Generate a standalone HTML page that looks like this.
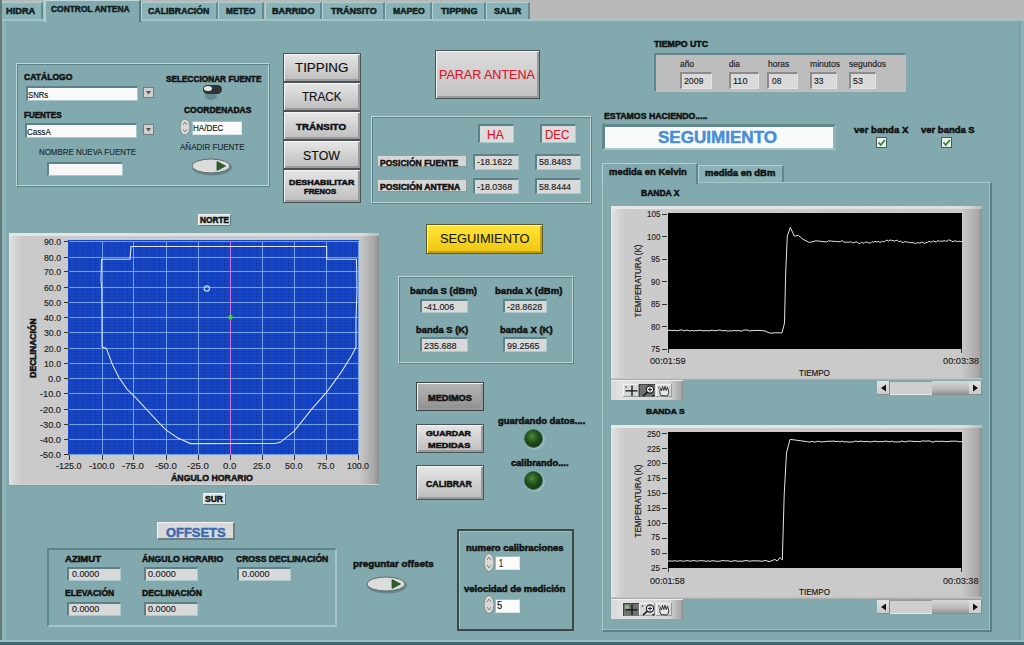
<!DOCTYPE html>
<html><head><meta charset="utf-8"><style>
html,body{margin:0;padding:0;width:1024px;height:645px;overflow:hidden;background:#82a9ae;}
body{position:relative;font-family:"Liberation Sans",sans-serif;}
div,span,svg{position:absolute;}
.t{white-space:nowrap;line-height:1;transform-origin:0 0;}
.b{-webkit-text-stroke:0.5px currentColor;}
.n{-webkit-text-stroke:0.15px currentColor;}
</style></head><body>
<div style="left:0px;top:0px;width:1024px;height:19px;background:#b8b8b8"></div>
<div style="left:0px;top:2px;width:43px;height:18px;box-sizing:border-box;background:#8ab3b8;border-top:1px solid #b0cdd0;border-left:1px solid #b4d2d5;border-right:2px solid #628a8f"></div>
<div style="left:141px;top:2px;width:77px;height:18px;box-sizing:border-box;background:#8ab3b8;border-top:1px solid #b0cdd0;border-left:1px solid #b4d2d5;border-right:2px solid #628a8f"></div>
<div style="left:218px;top:2px;width:46px;height:18px;box-sizing:border-box;background:#8ab3b8;border-top:1px solid #b0cdd0;border-left:1px solid #b4d2d5;border-right:2px solid #628a8f"></div>
<div style="left:265px;top:2px;width:57px;height:18px;box-sizing:border-box;background:#8ab3b8;border-top:1px solid #b0cdd0;border-left:1px solid #b4d2d5;border-right:2px solid #628a8f"></div>
<div style="left:322px;top:2px;width:63px;height:18px;box-sizing:border-box;background:#8ab3b8;border-top:1px solid #b0cdd0;border-left:1px solid #b4d2d5;border-right:2px solid #628a8f"></div>
<div style="left:385px;top:2px;width:47px;height:18px;box-sizing:border-box;background:#8ab3b8;border-top:1px solid #b0cdd0;border-left:1px solid #b4d2d5;border-right:2px solid #628a8f"></div>
<div style="left:432px;top:2px;width:54px;height:18px;box-sizing:border-box;background:#8ab3b8;border-top:1px solid #b0cdd0;border-left:1px solid #b4d2d5;border-right:2px solid #628a8f"></div>
<div style="left:486px;top:2px;width:44px;height:18px;box-sizing:border-box;background:#8ab3b8;border-top:1px solid #b0cdd0;border-left:1px solid #b4d2d5;border-right:2px solid #628a8f"></div>
<div style="left:0px;top:19px;width:1024px;height:2px;background:#a0c6ca"></div>
<div style="left:44px;top:0px;width:97px;height:22px;box-sizing:border-box;background:#82a9ae;border-top:1px solid #c0d8db;border-left:2px solid #b0ced1;border-right:2px solid #567c81"></div>
<div style="left:0px;top:0px;width:2px;height:645px;background:#667a7a"></div>
<div style="left:2px;top:21px;width:4px;height:621px;background:#8cb3b8"></div>
<div style="left:0px;top:640px;width:1024px;height:2px;background:#9cc0c4"></div>
<div style="left:1019px;top:21px;width:1px;height:619px;background:#739aa0"></div>
<div style="left:1021px;top:21px;width:3px;height:619px;background:#8db1b6"></div>
<div style="left:0px;top:642px;width:1024px;height:3px;background:#44686d"></div>
<span class="t b" id="t0" style="left:6.3px;top:7.02px;font-size:8.87px;font-weight:bold;color:#102020;transform:scaleX(1.0441);">HIDRA</span>
<span class="t b" id="t1" style="left:50.8px;top:4.79px;font-size:8.72px;font-weight:bold;color:#102020;transform:scaleX(0.9659);">CONTROL ANTENA</span>
<span class="t b" id="t2" style="left:147.5px;top:7.22px;font-size:8.87px;font-weight:bold;color:#102020;transform:scaleX(0.9901);">CALIBRACIÓN</span>
<span class="t b" id="t3" style="left:225.6px;top:7.22px;font-size:8.87px;font-weight:bold;color:#102020;transform:scaleX(0.9329);">METEO</span>
<span class="t b" id="t4" style="left:271.8px;top:7.22px;font-size:8.87px;font-weight:bold;color:#102020;transform:scaleX(1.0280);">BARRIDO</span>
<span class="t b" id="t5" style="left:330.7px;top:7.22px;font-size:8.87px;font-weight:bold;color:#102020;transform:scaleX(1.0105);">TRÁNSITO</span>
<span class="t b" id="t6" style="left:392.7px;top:7.22px;font-size:8.87px;font-weight:bold;color:#102020;transform:scaleX(0.9723);">MAPEO</span>
<span class="t b" id="t7" style="left:441.4px;top:7.22px;font-size:8.87px;font-weight:bold;color:#102020;transform:scaleX(1.0323);">TIPPING</span>
<span class="t b" id="t8" style="left:494.1px;top:7.22px;font-size:8.87px;font-weight:bold;color:#102020;transform:scaleX(1.0266);">SALIR</span>
<div style="left:16px;top:63px;width:254px;height:124px;box-sizing:border-box;border-top:1px solid #bfd8db;border-left:1px solid #bfd8db;border-bottom:1px solid #5b8288;border-right:1px solid #5b8288"></div>
<div style="left:17px;top:64px;width:252px;height:122px;box-sizing:border-box;border-top:1px solid #5b8288;border-left:1px solid #5b8288;border-bottom:1px solid #bfd8db;border-right:1px solid #bfd8db"></div>
<span class="t b" id="t9" style="left:24.1px;top:73.34px;font-size:8.43px;font-weight:bold;color:#111;transform:scaleX(1.0176);">CATÁLOGO</span>
<div style="left:26px;top:86px;width:112px;height:15px;background:#f9f9f9;border-top:2px solid #5b8288;border-left:2px solid #5b8288;border-bottom:1px solid #a9c9cd;border-right:1px solid #a9c9cd;box-sizing:border-box"></div>
<span class="t n" id="t10" style="left:27.8px;top:89.94px;font-size:9.71px;font-weight:normal;color:#111;transform:scaleX(0.7970);">SNRs</span>
<div style="left:143px;top:87px;width:11px;height:11px;box-sizing:border-box;background:#cfcfcf;border:1px solid #6f7f80"></div>
<svg style="left:145px;top:89px" width="7" height="7"><path d="M1 2 L6 2 L3.5 5.5 Z" fill="#555"/></svg>
<span class="t b" id="t11" style="left:23.5px;top:111.34px;font-size:8.43px;font-weight:bold;color:#111;transform:scaleX(0.9539);">FUENTES</span>
<div style="left:25px;top:123px;width:112px;height:15px;background:#f9f9f9;border-top:2px solid #5b8288;border-left:2px solid #5b8288;border-bottom:1px solid #a9c9cd;border-right:1px solid #a9c9cd;box-sizing:border-box"></div>
<span class="t n" id="t12" style="left:27.4px;top:126.74px;font-size:9.71px;font-weight:normal;color:#111;transform:scaleX(0.8323);">CassA</span>
<div style="left:143px;top:124px;width:11px;height:11px;box-sizing:border-box;background:#cfcfcf;border:1px solid #6f7f80"></div>
<svg style="left:145px;top:126px" width="7" height="7"><path d="M1 2 L6 2 L3.5 5.5 Z" fill="#555"/></svg>
<span class="t n" id="t13" style="left:39px;top:148.05px;font-size:9.29px;font-weight:normal;color:#1a2a2c;transform:scaleX(0.8524);">NOMBRE NUEVA FUENTE</span>
<div style="left:47px;top:162px;width:76px;height:14px;background:#f7f7f7;border-top:2px solid #5b8288;border-left:2px solid #5b8288;border-bottom:1px solid #a9c9cd;border-right:1px solid #a9c9cd;box-sizing:border-box"></div>
<span class="t b" id="t14" style="left:165.6px;top:75.34px;font-size:8.43px;font-weight:bold;color:#111;transform:scaleX(0.9802);">SELECCIONAR FUENTE</span>
<svg style="left:198px;top:83px" width="30" height="20"><ellipse cx="13" cy="13" rx="6" ry="4" fill="#5d8388" opacity="0.8"/><rect x="5" y="2" width="19" height="9" rx="4.5" fill="#2e3435"/><ellipse cx="10" cy="5.5" rx="4" ry="2.5" fill="#e8e8e8"/></svg>
<span class="t b" id="t15" style="left:184.3px;top:106.02px;font-size:8.87px;font-weight:bold;color:#111;transform:scaleX(0.9561);">COORDENADAS</span>
<svg style="left:179px;top:118px" width="13" height="19"><ellipse cx="6" cy="9" rx="5" ry="8" fill="#d8d8d8" stroke="#7c8c8d"/><path d="M4 7 L6 4 L8 7 M4 11 L6 14 L8 11" stroke="#888" fill="none"/></svg>
<div style="left:192px;top:121px;width:50px;height:14px;box-sizing:border-box;background:#fbfbfb;border-top:1px solid #9fbcbf;border-left:1px solid #9fbcbf;border-bottom:1px solid #d8e8ea;border-right:1px solid #d8e8ea"></div>
<span class="t n" id="t16" style="left:193.4px;top:122.56px;font-size:9.86px;font-weight:normal;color:#111;transform:scaleX(0.8171);">HA/DEC</span>
<span class="t n" id="t17" style="left:180px;top:143.45px;font-size:9.29px;font-weight:normal;color:#1a2a2c;transform:scaleX(0.8639);">AÑADIR FUENTE</span>
<svg style="left:190px;top:157px" width="44" height="20"><ellipse cx="22" cy="10.5" rx="20" ry="8" fill="#4f6a6e" opacity="0.55"/><ellipse cx="21" cy="9" rx="19" ry="7" fill="#dcdcdc" stroke="#5d6a6b"/><path d="M27 4.5 L35.5 9 L27 13.5 Z" fill="#2b5e28" stroke="#244f22" stroke-width="0.8" stroke-linejoin="round"/></svg>
<div style="left:283px;top:53px;width:78px;height:29px;box-sizing:border-box;border:1px solid #4a5456;background:linear-gradient(#e6e6e6,#d2d2d2 50%,#bdbdbd);box-shadow:inset 1px 1px 0 #f4f4f4,inset -2px -2px 0 #9a9a9a"></div>
<div style="left:283px;top:82px;width:78px;height:29px;box-sizing:border-box;border:1px solid #4a5456;background:linear-gradient(#e6e6e6,#d2d2d2 50%,#bdbdbd);box-shadow:inset 1px 1px 0 #f4f4f4,inset -2px -2px 0 #9a9a9a"></div>
<div style="left:283px;top:111px;width:78px;height:29px;box-sizing:border-box;border:1px solid #4a5456;background:linear-gradient(#e6e6e6,#d2d2d2 50%,#bdbdbd);box-shadow:inset 1px 1px 0 #f4f4f4,inset -2px -2px 0 #9a9a9a"></div>
<div style="left:283px;top:140px;width:78px;height:29px;box-sizing:border-box;border:1px solid #4a5456;background:linear-gradient(#e6e6e6,#d2d2d2 50%,#bdbdbd);box-shadow:inset 1px 1px 0 #f4f4f4,inset -2px -2px 0 #9a9a9a"></div>
<div style="left:283px;top:169px;width:78px;height:34px;box-sizing:border-box;border:1px solid #4a5456;background:linear-gradient(#e6e6e6,#d2d2d2 50%,#bdbdbd);box-shadow:inset 1px 1px 0 #f4f4f4,inset -2px -2px 0 #9a9a9a"></div>
<span class="t n" id="t18" style="left:295px;top:62.14px;font-size:12.0px;font-weight:normal;color:#111;transform:scaleX(1.1121);">TIPPING</span>
<span class="t n" id="t19" style="left:301.7px;top:91.25px;font-size:12.57px;font-weight:normal;color:#111;transform:scaleX(0.9277);">TRACK</span>
<span class="t b" id="t20" style="left:296.4px;top:121.96px;font-size:9.59px;font-weight:bold;color:#111;transform:scaleX(1.0270);">TRÁNSITO</span>
<span class="t n" id="t21" style="left:303px;top:150.28px;font-size:12.71px;font-weight:normal;color:#111;transform:scaleX(0.9769);">STOW</span>
<span class="t b" id="t22" style="left:288.5px;top:178.64px;font-size:7.56px;font-weight:bold;color:#111;transform:scaleX(1.1757);">DESHABILITAR</span>
<span class="t b" id="t23" style="left:304.3px;top:188.12px;font-size:7.99px;font-weight:bold;color:#111;transform:scaleX(0.9675);">FRENOS</span>
<div style="left:435px;top:50px;width:105px;height:49px;box-sizing:border-box;border:1px solid #4a5456;background:linear-gradient(#dcdcdc,#cfcfcf 50%,#c2c2c2);box-shadow:inset 1px 1px 0 #f4f4f4,inset -2px -2px 0 #9a9a9a"></div>
<span class="t n" id="t24" style="left:439px;top:69.05px;font-size:12.57px;font-weight:normal;color:#d8182a;transform:scaleX(0.9968);">PARAR ANTENA</span>
<div style="left:371px;top:116px;width:221px;height:88px;box-sizing:border-box;border-top:1px solid #bfd8db;border-left:1px solid #bfd8db;border-bottom:1px solid #5b8288;border-right:1px solid #5b8288"></div>
<div style="left:372px;top:117px;width:219px;height:86px;box-sizing:border-box;border-top:1px solid #5b8288;border-left:1px solid #5b8288;border-bottom:1px solid #bfd8db;border-right:1px solid #bfd8db"></div>
<div style="left:478px;top:124px;width:36px;height:19px;background:#dcdcdc;border-top:2px solid #5b8288;border-left:2px solid #5b8288;border-bottom:1px solid #a9c9cd;border-right:1px solid #a9c9cd;box-sizing:border-box"></div>
<div style="left:540px;top:124px;width:36px;height:19px;background:#dcdcdc;border-top:2px solid #5b8288;border-left:2px solid #5b8288;border-bottom:1px solid #a9c9cd;border-right:1px solid #a9c9cd;box-sizing:border-box"></div>
<span class="t n" id="t25" style="left:487px;top:128.85px;font-size:12.57px;font-weight:normal;color:#d8182a;transform:scaleX(0.9626);">HA</span>
<span class="t n" id="t26" style="left:544.9px;top:128.85px;font-size:12.57px;font-weight:normal;color:#d8182a;transform:scaleX(0.9159);">DEC</span>
<div style="left:378px;top:156px;width:89px;height:11px;box-sizing:border-box;background:#d6d6d6;border-right:1px solid #8a9a9b;border-bottom:1px solid #8a9a9b"></div>
<div style="left:378px;top:180px;width:89px;height:12px;box-sizing:border-box;background:#d6d6d6;border-right:1px solid #8a9a9b;border-bottom:1px solid #8a9a9b"></div>
<span class="t b" id="t27" style="left:380px;top:159.52px;font-size:8.28px;font-weight:bold;color:#111;transform:scaleX(1.0332);">POSICIÓN FUENTE</span>
<span class="t b" id="t28" style="left:380px;top:184.12px;font-size:8.28px;font-weight:bold;color:#111;transform:scaleX(1.0448);">POSICIÓN ANTENA</span>
<div style="left:473px;top:154px;width:46px;height:16px;background:#d9d9d9;border-top:2px solid #5b8288;border-left:2px solid #5b8288;border-bottom:1px solid #a9c9cd;border-right:1px solid #a9c9cd;box-sizing:border-box"></div>
<div style="left:535px;top:154px;width:46px;height:16px;background:#d9d9d9;border-top:2px solid #5b8288;border-left:2px solid #5b8288;border-bottom:1px solid #a9c9cd;border-right:1px solid #a9c9cd;box-sizing:border-box"></div>
<div style="left:473px;top:178px;width:46px;height:16px;background:#d9d9d9;border-top:2px solid #5b8288;border-left:2px solid #5b8288;border-bottom:1px solid #a9c9cd;border-right:1px solid #a9c9cd;box-sizing:border-box"></div>
<div style="left:535px;top:178px;width:46px;height:16px;background:#d9d9d9;border-top:2px solid #5b8288;border-left:2px solid #5b8288;border-bottom:1px solid #a9c9cd;border-right:1px solid #a9c9cd;box-sizing:border-box"></div>
<span class="t n" id="t29" style="left:476.8px;top:157.10px;font-size:9.57px;font-weight:normal;color:#222;transform:scaleX(0.9321);">-18.1622</span>
<span class="t n" id="t30" style="left:538.6px;top:157.10px;font-size:9.57px;font-weight:normal;color:#222;transform:scaleX(0.9312);">58.8483</span>
<span class="t n" id="t31" style="left:476.8px;top:182.65px;font-size:9.29px;font-weight:normal;color:#222;transform:scaleX(0.9607);">-18.0368</span>
<span class="t n" id="t32" style="left:539.3px;top:182.65px;font-size:9.29px;font-weight:normal;color:#222;transform:scaleX(0.9534);">58.8444</span>
<span class="t b" id="t33" style="left:654.4px;top:41.29px;font-size:8.14px;font-weight:bold;color:#111;transform:scaleX(1.0776);">TIEMPO UTC</span>
<div style="left:654px;top:53px;width:252px;height:39px;box-sizing:border-box;background:#bdbdbd;border-top:2px solid #5f878c;border-left:2px solid #5f878c;border-bottom:1px solid #a8c8cc;border-right:1px solid #a8c8cc"></div>
<div style="left:680px;top:72px;width:32px;height:17px;box-sizing:border-box;background:#dadada;border-top:2px solid #8c8c8c;border-left:2px solid #8c8c8c;border-bottom:1px solid #e4e4e4;border-right:1px solid #e4e4e4"></div>
<span class="t n" id="t34" style="left:680px;top:60.11px;font-size:8.57px;font-weight:normal;color:#1a1a1a;transform:scaleX(0.9792);">año</span>
<span class="t n" id="t35" style="left:683.8px;top:76.82px;font-size:9.14px;font-weight:normal;color:#1a1a1a;transform:scaleX(0.9551);">2009</span>
<div style="left:729px;top:72px;width:30px;height:17px;box-sizing:border-box;background:#dadada;border-top:2px solid #8c8c8c;border-left:2px solid #8c8c8c;border-bottom:1px solid #e4e4e4;border-right:1px solid #e4e4e4"></div>
<span class="t n" id="t36" style="left:728.9px;top:60.11px;font-size:8.57px;font-weight:normal;color:#1a1a1a;transform:scaleX(0.9530);">dia</span>
<span class="t n" id="t37" style="left:733px;top:76.82px;font-size:9.14px;font-weight:normal;color:#1a1a1a;transform:scaleX(0.9899);">110</span>
<div style="left:767px;top:72px;width:31px;height:17px;box-sizing:border-box;background:#dadada;border-top:2px solid #8c8c8c;border-left:2px solid #8c8c8c;border-bottom:1px solid #e4e4e4;border-right:1px solid #e4e4e4"></div>
<span class="t n" id="t38" style="left:767.8px;top:60.11px;font-size:8.57px;font-weight:normal;color:#1a1a1a;transform:scaleX(0.9896);">horas</span>
<span class="t n" id="t39" style="left:771.7px;top:76.82px;font-size:9.14px;font-weight:normal;color:#1a1a1a;transform:scaleX(0.9157);">08</span>
<div style="left:810px;top:72px;width:27px;height:17px;box-sizing:border-box;background:#dadada;border-top:2px solid #8c8c8c;border-left:2px solid #8c8c8c;border-bottom:1px solid #e4e4e4;border-right:1px solid #e4e4e4"></div>
<span class="t n" id="t40" style="left:809.7px;top:60.11px;font-size:8.57px;font-weight:normal;color:#1a1a1a;transform:scaleX(1.0005);">minutos</span>
<span class="t n" id="t41" style="left:813.9px;top:76.82px;font-size:9.14px;font-weight:normal;color:#1a1a1a;transform:scaleX(0.9255);">33</span>
<div style="left:849px;top:72px;width:27px;height:17px;box-sizing:border-box;background:#dadada;border-top:2px solid #8c8c8c;border-left:2px solid #8c8c8c;border-bottom:1px solid #e4e4e4;border-right:1px solid #e4e4e4"></div>
<span class="t n" id="t42" style="left:849px;top:60.11px;font-size:8.57px;font-weight:normal;color:#1a1a1a;transform:scaleX(0.9962);">segundos</span>
<span class="t n" id="t43" style="left:852.5px;top:76.82px;font-size:9.14px;font-weight:normal;color:#1a1a1a;transform:scaleX(0.9649);">53</span>
<span class="t b" id="t44" style="left:604.3px;top:111.65px;font-size:9.01px;font-weight:bold;color:#111;transform:scaleX(0.9687);">ESTAMOS HACIENDO.....</span>
<div style="left:602px;top:124px;width:234px;height:26px;box-sizing:border-box;background:#f9fbfb;border-top:3px solid #5f878c;border-left:3px solid #5f878c;border-bottom:2px solid #a8c8cc;border-right:3px solid #8fb4b8"></div>
<span class="t b" id="t45" style="left:658px;top:129.89px;font-size:15.99px;font-weight:bold;color:#4a8ed8;transform:scaleX(1.0661);">SEGUIMIENTO</span>
<span class="t b" id="t46" style="left:853.9px;top:126.27px;font-size:9.16px;font-weight:bold;color:#111;transform:scaleX(1.0458);">ver banda X</span>
<span class="t b" id="t47" style="left:920.9px;top:126.27px;font-size:9.16px;font-weight:bold;color:#111;transform:scaleX(1.0342);">ver banda S</span>
<div style="left:876px;top:137px;width:11px;height:11px;box-sizing:border-box;background:#e8f0ea;border:1px solid #4a5a5c"></div>
<svg style="left:877px;top:138px" width="9" height="9"><path d="M1.5 4.5 L3.8 7 L7.8 2" stroke="#2f7a3a" stroke-width="1.6" fill="none"/></svg>
<div style="left:941px;top:137px;width:11px;height:11px;box-sizing:border-box;background:#e8f0ea;border:1px solid #4a5a5c"></div>
<svg style="left:942px;top:138px" width="9" height="9"><path d="M1.5 4.5 L3.8 7 L7.8 2" stroke="#2f7a3a" stroke-width="1.6" fill="none"/></svg>
<div style="left:602px;top:182px;width:390px;height:450px;box-sizing:border-box;border-top:1px solid #a8c8cc;border-left:1px solid #a8c8cc;border-right:2px solid #5a8186;border-bottom:2px solid #5a8186;box-shadow:inset -1px -1px 0 #9cc0c4"></div>
<div style="left:698px;top:165px;width:86px;height:17px;box-sizing:border-box;background:#8ab2b7;border-top:1px solid #b4d0d3;border-left:1px solid #b4d0d3;border-right:2px solid #5f868b"></div>
<div style="left:602px;top:163px;width:96px;height:21px;box-sizing:border-box;background:#82a9ae;border-top:1px solid #b4d0d3;border-left:1px solid #b4d0d3;border-right:2px solid #5f868b"></div>
<span class="t b" id="t48" style="left:609px;top:166.78px;font-size:9.74px;font-weight:bold;color:#111;transform:scaleX(0.9717);">medida en Kelvin</span>
<span class="t b" id="t49" style="left:705.4px;top:169.19px;font-size:8.72px;font-weight:bold;color:#111;transform:scaleX(1.0828);">medida en dBm</span>
<span class="t b" id="t50" style="left:640.9px;top:188.54px;font-size:8.43px;font-weight:bold;color:#111;transform:scaleX(1.0115);">BANDA X</span>
<span class="t b" id="t51" style="left:645.7px;top:408.49px;font-size:7.85px;font-weight:bold;color:#111;transform:scaleX(1.0888);">BANDA S</span>
<div style="left:611px;top:206px;width:371px;height:174px;background:linear-gradient(90deg,#e4e4e4 0px,#d2d2d2 9px,#cbcbcb 14px,#c9c9c9 350px,#a9a9a9 367px,#8e8e8e 371px)"></div>
<div style="left:611px;top:206px;width:371px;height:3px;background:linear-gradient(90deg,#e8e8e8,#dedede 95%,#bbb)"></div>
<div style="left:611px;top:378px;width:371px;height:1px;background:#c4c4c4"></div>
<div style="left:611px;top:379px;width:371px;height:1px;background:#adadad"></div>
<div style="left:668px;top:213px;width:294px;height:136px;background:#000"></div>
<svg style="left:668px;top:213px" width="294" height="136"><polyline points="0.0,117.5 2.0,117.2 4.0,117.6 6.0,117.3 8.0,117.6 10.0,117.7 12.0,117.0 14.0,116.9 16.0,117.9 18.0,117.2 20.0,117.2 22.0,118.1 24.0,117.5 26.0,117.9 28.0,117.5 30.0,117.7 32.0,117.1 34.0,117.7 36.0,117.9 38.0,117.5 40.0,117.8 42.0,117.7 44.0,117.0 46.0,117.8 48.0,117.6 50.0,117.3 52.0,116.9 54.0,117.9 56.0,117.5 58.0,117.8 60.0,118.0 62.0,117.8 64.0,118.0 66.0,117.4 68.0,117.9 70.0,117.4 72.0,118.0 74.0,118.0 76.0,117.0 78.0,117.1 80.0,117.2 82.0,118.1 84.0,117.4 86.0,117.7 88.0,117.3 90.0,117.5 92.0,117.4 97.0,118.0 102.0,120.2 108.0,119.8 114.0,119.8 116.5,110.0 117.6,62.0 119.3,23.0 122.3,14.4 126.3,23.0 130.6,22.6 135.0,26.3 141.4,29.5 148.0,27.8 158.8,29.0 160.5,27.7 162.0,28.1 163.5,28.0 165.0,28.5 166.5,28.1 168.0,28.6 169.5,28.5 171.0,28.8 172.5,28.4 174.0,27.6 175.5,28.9 177.0,29.3 178.5,29.3 180.0,28.9 181.5,29.3 183.0,28.6 184.5,29.9 186.0,29.5 187.5,29.1 189.0,28.8 190.5,30.3 192.0,30.6 193.5,29.1 195.0,30.3 196.5,29.6 198.0,29.1 199.5,29.3 201.0,30.0 202.5,30.1 204.0,28.5 205.5,29.3 207.0,28.1 208.5,29.2 210.0,28.3 211.5,29.2 213.0,29.2 214.5,28.2 216.0,29.0 217.5,27.6 219.0,27.1 220.5,28.0 222.0,27.0 223.5,27.3 225.0,27.7 226.5,28.1 228.0,27.4 229.5,27.3 231.0,28.9 232.5,28.0 234.0,29.3 235.5,29.4 237.0,28.6 238.5,28.9 240.0,29.2 241.5,29.6 243.0,29.6 244.5,29.7 246.0,29.9 247.5,30.5 249.0,29.8 250.5,29.7 252.0,30.2 253.5,29.3 255.0,29.3 256.5,30.5 258.0,29.5 259.5,29.5 261.0,28.4 262.5,28.9 264.0,29.1 265.5,27.9 267.0,28.8 268.5,28.7 270.0,27.5 271.5,28.4 273.0,28.0 274.5,28.3 276.0,27.6 277.5,28.2 279.0,28.2 280.5,27.0 282.0,27.1 283.5,28.2 285.0,28.8 286.5,27.7 288.0,28.2 289.5,28.6 291.0,28.2 292.5,28.5 294.0,28.5" fill="none" stroke="#e4e4e4" stroke-width="1"/></svg>
<div style="left:662px;top:214px;width:5px;height:1px;background:#333"></div>
<div style="left:662px;top:236px;width:5px;height:1px;background:#333"></div>
<div style="left:662px;top:259px;width:5px;height:1px;background:#333"></div>
<div style="left:662px;top:281px;width:5px;height:1px;background:#333"></div>
<div style="left:662px;top:304px;width:5px;height:1px;background:#333"></div>
<div style="left:662px;top:326px;width:5px;height:1px;background:#333"></div>
<div style="left:662px;top:349px;width:5px;height:1px;background:#333"></div>
<div style="left:668px;top:349px;width:1px;height:4px;background:#333"></div>
<div style="left:961px;top:349px;width:1px;height:4px;background:#333"></div>
<div style="left:611px;top:380px;width:72px;height:20px;background:linear-gradient(90deg,#d8d8d8,#e2e2e2 15%,#d6d6d6 80%,#a8a8a8 97%,#8a8a8a)"></div>
<div style="left:611px;top:380px;width:72px;height:1px;background:#eeeeee"></div>
<div style="left:623px;top:384px;width:16px;height:13px;background:#d6d6d6;box-shadow:inset -1px -1px 0 #9a9a9a,inset 1px 1px 0 #f2f2f2"></div>
<div style="left:639px;top:384px;width:16px;height:13px;background:#6e756e;box-shadow:inset 1px 1px 0 #444"></div>
<div style="left:656px;top:384px;width:16px;height:13px;background:#d6d6d6;box-shadow:inset -1px -1px 0 #9a9a9a,inset 1px 1px 0 #f2f2f2"></div>
<svg style="left:623px;top:384px" width="50" height="13"><circle cx="3" cy="3" r="1" fill="#777"/><path d="M9 1.5 V12 M2.5 6.8 H14.5" stroke="#111" stroke-width="1.3"/><circle cx="19.5" cy="3" r="1" fill="#777"/><circle cx="27" cy="5.5" r="3.6" fill="#e6e8f0" stroke="#222" stroke-width="1.1"/><path d="M27 3.5 V7.5 M25 5.5 H29" stroke="#223" stroke-width="1"/><path d="M24.5 8 L20 12" stroke="#111" stroke-width="1.6"/><path d="M29 11 L32 11 L30.5 12.8 Z" fill="#111"/><circle cx="36" cy="3.5" r="0.9" fill="#777"/><path d="M38 11.5 C36.5 9 36.5 6 37.5 4.5 L38.5 7 L39.5 2.5 L40.8 6.5 L42 2.3 L43.2 6.5 L44.5 3.2 L45.5 7 C46 9.5 45 11 44 12 Z" fill="#e8e8e8" stroke="#222" stroke-width="0.9"/></svg>
<div style="left:877px;top:381px;width:105px;height:14px;background:#c8c8c8"></div>
<div style="left:877px;top:381px;width:13px;height:14px;background:linear-gradient(#e2e2e2,#c9c9c9);box-shadow:inset -1px -1px 0 #8a8a8a"></div>
<div style="left:969px;top:381px;width:13px;height:14px;background:linear-gradient(#e2e2e2,#c9c9c9);box-shadow:inset -1px -1px 0 #8a8a8a"></div>
<div style="left:890px;top:381px;width:42px;height:14px;background:#cfcfcf;box-shadow:inset 0 -1px 0 #e8e8e8,inset 0 1px 0 #999"></div>
<div style="left:932px;top:381px;width:37px;height:14px;background:linear-gradient(#d8d8d8,#b8b8b8 60%,#8a8a8a)"></div>
<svg style="left:877px;top:381px" width="105" height="14"><path d="M4 7 L9 3.5 L9 10.5 Z" fill="#111"/><path d="M101 7 L96 3.5 L96 10.5 Z" fill="#111"/></svg>
<div style="left:633px;top:243px;width:10px;height:74px;"></div>
<div style="left:611px;top:425px;width:371px;height:174px;background:linear-gradient(90deg,#e4e4e4 0px,#d2d2d2 9px,#cbcbcb 14px,#c9c9c9 350px,#a9a9a9 367px,#8e8e8e 371px)"></div>
<div style="left:611px;top:425px;width:371px;height:3px;background:linear-gradient(90deg,#e8e8e8,#dedede 95%,#bbb)"></div>
<div style="left:611px;top:597px;width:371px;height:1px;background:#c4c4c4"></div>
<div style="left:611px;top:598px;width:371px;height:1px;background:#adadad"></div>
<div style="left:668px;top:432px;width:294px;height:136px;background:#000"></div>
<svg style="left:668px;top:432px" width="294" height="136"><polyline points="0.0,129.0 2.0,128.9 4.0,129.1 6.0,128.8 8.0,128.9 10.0,129.3 12.0,128.5 14.0,129.1 16.0,129.2 18.0,128.8 20.0,128.7 22.0,129.3 24.0,128.7 26.0,128.7 28.0,128.9 30.0,129.2 32.0,128.6 34.0,128.8 36.0,128.8 38.0,129.3 40.0,128.9 42.0,129.4 44.0,128.7 46.0,128.8 48.0,129.2 50.0,129.4 52.0,129.0 54.0,128.7 56.0,128.6 58.0,129.0 60.0,128.7 62.0,129.3 64.0,129.3 66.0,128.7 68.0,128.8 70.0,129.3 72.0,129.1 74.0,129.3 76.0,128.8 78.0,128.6 80.0,128.8 82.0,129.3 84.0,128.8 86.0,128.8 88.0,128.9 90.0,128.9 92.0,128.9 94.0,129.4 96.0,128.7 98.0,128.5 100.0,129.4 102.0,129.4 106.9,127.4 109.2,129.0 112.0,125.6 114.3,127.9 116.2,62.8 118.5,20.9 122.0,7.4 127.8,8.1 139.4,9.7 142.0,10.1 144.0,9.4 146.0,10.0 148.0,10.0 150.0,9.2 152.0,9.8 154.0,9.9 156.0,9.7 158.0,9.5 160.0,9.2 162.0,9.3 164.0,9.2 166.0,9.0 168.0,9.6 170.0,9.2 172.0,9.9 174.0,9.0 176.0,10.0 178.0,9.7 180.0,10.0 182.0,10.0 184.0,10.0 186.0,9.6 188.0,8.9 190.0,9.8 192.0,9.1 194.0,9.3 196.0,9.7 198.0,9.5 200.0,9.4 202.0,10.0 204.0,9.6 206.0,9.3 208.0,9.2 210.0,9.9 212.0,9.5 214.0,9.8 216.0,9.3 218.0,9.1 220.0,9.5 222.0,9.9 224.0,9.1 226.0,9.9 228.0,10.0 230.0,9.9 232.0,9.9 234.0,8.9 236.0,9.7 238.0,9.9 240.0,9.0 242.0,9.2 244.0,9.2 246.0,9.5 248.0,9.4 250.0,9.5 252.0,9.8 254.0,8.9 256.0,9.0 258.0,9.1 260.0,9.0 262.0,9.0 264.0,10.1 266.0,9.9 268.0,9.0 270.0,9.5 272.0,9.3 274.0,9.3 276.0,9.3 278.0,9.7 280.0,9.6 282.0,9.3 284.0,9.1 286.0,9.3 288.0,9.0 290.0,9.6 292.0,9.8 294.0,9.4" fill="none" stroke="#e4e4e4" stroke-width="1"/></svg>
<div style="left:662px;top:433px;width:5px;height:1px;background:#333"></div>
<div style="left:662px;top:448px;width:5px;height:1px;background:#333"></div>
<div style="left:662px;top:463px;width:5px;height:1px;background:#333"></div>
<div style="left:662px;top:478px;width:5px;height:1px;background:#333"></div>
<div style="left:662px;top:493px;width:5px;height:1px;background:#333"></div>
<div style="left:662px;top:508px;width:5px;height:1px;background:#333"></div>
<div style="left:662px;top:523px;width:5px;height:1px;background:#333"></div>
<div style="left:662px;top:538px;width:5px;height:1px;background:#333"></div>
<div style="left:662px;top:553px;width:5px;height:1px;background:#333"></div>
<div style="left:662px;top:568px;width:5px;height:1px;background:#333"></div>
<div style="left:668px;top:568px;width:1px;height:4px;background:#333"></div>
<div style="left:961px;top:568px;width:1px;height:4px;background:#333"></div>
<div style="left:611px;top:599px;width:72px;height:20px;background:linear-gradient(90deg,#d8d8d8,#e2e2e2 15%,#d6d6d6 80%,#a8a8a8 97%,#8a8a8a)"></div>
<div style="left:611px;top:599px;width:72px;height:1px;background:#eeeeee"></div>
<div style="left:623px;top:603px;width:16px;height:13px;background:#6e756e;box-shadow:inset 1px 1px 0 #444"></div>
<div style="left:639px;top:603px;width:16px;height:13px;background:#d6d6d6;box-shadow:inset -1px -1px 0 #9a9a9a,inset 1px 1px 0 #f2f2f2"></div>
<div style="left:656px;top:603px;width:16px;height:13px;background:#d6d6d6;box-shadow:inset -1px -1px 0 #9a9a9a,inset 1px 1px 0 #f2f2f2"></div>
<svg style="left:623px;top:603px" width="50" height="13"><circle cx="4" cy="4" r="2" fill="#8cc486"/><path d="M9 1.5 V12 M2.5 6.8 H14.5" stroke="#111" stroke-width="1.3"/><circle cx="19.5" cy="3" r="1" fill="#777"/><circle cx="27" cy="5.5" r="3.6" fill="#e6e8f0" stroke="#222" stroke-width="1.1"/><path d="M27 3.5 V7.5 M25 5.5 H29" stroke="#223" stroke-width="1"/><path d="M24.5 8 L20 12" stroke="#111" stroke-width="1.6"/><path d="M29 11 L32 11 L30.5 12.8 Z" fill="#111"/><circle cx="36" cy="3.5" r="0.9" fill="#777"/><path d="M38 11.5 C36.5 9 36.5 6 37.5 4.5 L38.5 7 L39.5 2.5 L40.8 6.5 L42 2.3 L43.2 6.5 L44.5 3.2 L45.5 7 C46 9.5 45 11 44 12 Z" fill="#e8e8e8" stroke="#222" stroke-width="0.9"/></svg>
<div style="left:877px;top:600px;width:105px;height:14px;background:#c8c8c8"></div>
<div style="left:877px;top:600px;width:13px;height:14px;background:linear-gradient(#e2e2e2,#c9c9c9);box-shadow:inset -1px -1px 0 #8a8a8a"></div>
<div style="left:969px;top:600px;width:13px;height:14px;background:linear-gradient(#e2e2e2,#c9c9c9);box-shadow:inset -1px -1px 0 #8a8a8a"></div>
<div style="left:890px;top:600px;width:42px;height:14px;background:#cfcfcf;box-shadow:inset 0 -1px 0 #e8e8e8,inset 0 1px 0 #999"></div>
<div style="left:932px;top:600px;width:37px;height:14px;background:linear-gradient(#d8d8d8,#b8b8b8 60%,#8a8a8a)"></div>
<svg style="left:877px;top:600px" width="105" height="14"><path d="M4 7 L9 3.5 L9 10.5 Z" fill="#111"/><path d="M101 7 L96 3.5 L96 10.5 Z" fill="#111"/></svg>
<div style="left:633px;top:464px;width:10px;height:74px;"></div>
<span class="t n" id="t52" style="left:646.6px;top:208.90px;font-size:9.57px;font-weight:normal;color:#222;transform:scaleX(0.8391);">105</span>
<span class="t n" id="t53" style="left:646.6px;top:231.90px;font-size:9.57px;font-weight:normal;color:#222;transform:scaleX(0.8391);">100</span>
<span class="t n" id="t54" style="left:651px;top:253.90px;font-size:9.57px;font-weight:normal;color:#222;transform:scaleX(0.8458);">95</span>
<span class="t n" id="t55" style="left:651px;top:276.50px;font-size:9.57px;font-weight:normal;color:#222;transform:scaleX(0.8458);">90</span>
<span class="t n" id="t56" style="left:651px;top:298.50px;font-size:9.57px;font-weight:normal;color:#222;transform:scaleX(0.8458);">85</span>
<span class="t n" id="t57" style="left:651px;top:321.50px;font-size:9.57px;font-weight:normal;color:#222;transform:scaleX(0.8458);">80</span>
<span class="t n" id="t58" style="left:651px;top:343.50px;font-size:9.57px;font-weight:normal;color:#222;transform:scaleX(0.8458);">75</span>
<span class="t n" id="t59" style="left:646.6px;top:428.70px;font-size:9.57px;font-weight:normal;color:#222;transform:scaleX(0.8391);">250</span>
<span class="t n" id="t60" style="left:646.6px;top:443.50px;font-size:9.57px;font-weight:normal;color:#222;transform:scaleX(0.8391);">225</span>
<span class="t n" id="t61" style="left:646.6px;top:458.30px;font-size:9.57px;font-weight:normal;color:#222;transform:scaleX(0.8391);">200</span>
<span class="t n" id="t62" style="left:646.6px;top:473.10px;font-size:9.57px;font-weight:normal;color:#222;transform:scaleX(0.8391);">175</span>
<span class="t n" id="t63" style="left:646.6px;top:487.90px;font-size:9.57px;font-weight:normal;color:#222;transform:scaleX(0.8391);">150</span>
<span class="t n" id="t64" style="left:646.6px;top:502.70px;font-size:9.57px;font-weight:normal;color:#222;transform:scaleX(0.8391);">125</span>
<span class="t n" id="t65" style="left:646.6px;top:517.50px;font-size:9.57px;font-weight:normal;color:#222;transform:scaleX(0.8391);">100</span>
<span class="t n" id="t66" style="left:651px;top:532.30px;font-size:9.57px;font-weight:normal;color:#222;transform:scaleX(0.8458);">75</span>
<span class="t n" id="t67" style="left:651px;top:547.10px;font-size:9.57px;font-weight:normal;color:#222;transform:scaleX(0.8458);">50</span>
<span class="t n" id="t68" style="left:651px;top:562.90px;font-size:9.57px;font-weight:normal;color:#222;transform:scaleX(0.8458);">25</span>
<span class="t n" id="t69" style="left:649.6px;top:356.82px;font-size:9.14px;font-weight:normal;color:#222;transform:scaleX(1.0019);">00:01:59</span>
<span class="t n" id="t70" style="left:943px;top:356.82px;font-size:9.14px;font-weight:normal;color:#222;transform:scaleX(1.0104);">00:03:38</span>
<span class="t n" id="t71" style="left:798.5px;top:369.08px;font-size:8.43px;font-weight:normal;color:#111;transform:scaleX(0.9567);">TIEMPO</span>
<span class="t n" id="t72" style="left:650px;top:576.59px;font-size:9.0px;font-weight:normal;color:#222;transform:scaleX(0.9930);">00:01:58</span>
<span class="t n" id="t73" style="left:943.3px;top:576.59px;font-size:9.0px;font-weight:normal;color:#222;transform:scaleX(1.0129);">00:03:38</span>
<span class="t n" id="t74" style="left:798.5px;top:586.94px;font-size:9.71px;font-weight:normal;color:#111;transform:scaleX(0.8306);">TIEMPO</span>
<div style="left:9px;top:233px;width:370px;height:253px;background:linear-gradient(90deg,#e2e2e2 0px,#d0d0d0 8px,#cacaca 14px,#c9c9c9 350px,#a8a8a8 365px,#8c8c8c 370px)"></div>
<div style="left:9px;top:233px;width:370px;height:3px;background:linear-gradient(90deg,#e6e6e6,#dcdcdc 95%,#bbb)"></div>
<div style="left:9px;top:484px;width:370px;height:1px;background:#d4d4d4"></div>
<div style="left:9px;top:485px;width:370px;height:1px;background:#8e989a"></div>
<svg style="left:69px;top:241px;overflow:visible" width="290" height="214"><rect x="-1" y="-1" width="291" height="215" fill="#1645c6"/><rect x="7" y="0" width="1" height="214" fill="#0f318f" opacity="0.4"/><rect x="13" y="0" width="1" height="214" fill="#0f318f" opacity="0.4"/><rect x="20" y="0" width="1" height="214" fill="#0f318f" opacity="0.4"/><rect x="26" y="0" width="1" height="214" fill="#0f318f" opacity="0.4"/><rect x="39" y="0" width="1" height="214" fill="#0f318f" opacity="0.4"/><rect x="45" y="0" width="1" height="214" fill="#0f318f" opacity="0.4"/><rect x="52" y="0" width="1" height="214" fill="#0f318f" opacity="0.4"/><rect x="58" y="0" width="1" height="214" fill="#0f318f" opacity="0.4"/><rect x="71" y="0" width="1" height="214" fill="#0f318f" opacity="0.4"/><rect x="77" y="0" width="1" height="214" fill="#0f318f" opacity="0.4"/><rect x="84" y="0" width="1" height="214" fill="#0f318f" opacity="0.4"/><rect x="90" y="0" width="1" height="214" fill="#0f318f" opacity="0.4"/><rect x="103" y="0" width="1" height="214" fill="#0f318f" opacity="0.4"/><rect x="110" y="0" width="1" height="214" fill="#0f318f" opacity="0.4"/><rect x="116" y="0" width="1" height="214" fill="#0f318f" opacity="0.4"/><rect x="123" y="0" width="1" height="214" fill="#0f318f" opacity="0.4"/><rect x="135" y="0" width="1" height="214" fill="#0f318f" opacity="0.4"/><rect x="142" y="0" width="1" height="214" fill="#0f318f" opacity="0.4"/><rect x="148" y="0" width="1" height="214" fill="#0f318f" opacity="0.4"/><rect x="155" y="0" width="1" height="214" fill="#0f318f" opacity="0.4"/><rect x="167" y="0" width="1" height="214" fill="#0f318f" opacity="0.4"/><rect x="174" y="0" width="1" height="214" fill="#0f318f" opacity="0.4"/><rect x="180" y="0" width="1" height="214" fill="#0f318f" opacity="0.4"/><rect x="187" y="0" width="1" height="214" fill="#0f318f" opacity="0.4"/><rect x="199" y="0" width="1" height="214" fill="#0f318f" opacity="0.4"/><rect x="206" y="0" width="1" height="214" fill="#0f318f" opacity="0.4"/><rect x="212" y="0" width="1" height="214" fill="#0f318f" opacity="0.4"/><rect x="219" y="0" width="1" height="214" fill="#0f318f" opacity="0.4"/><rect x="231" y="0" width="1" height="214" fill="#0f318f" opacity="0.4"/><rect x="238" y="0" width="1" height="214" fill="#0f318f" opacity="0.4"/><rect x="244" y="0" width="1" height="214" fill="#0f318f" opacity="0.4"/><rect x="251" y="0" width="1" height="214" fill="#0f318f" opacity="0.4"/><rect x="263" y="0" width="1" height="214" fill="#0f318f" opacity="0.4"/><rect x="270" y="0" width="1" height="214" fill="#0f318f" opacity="0.4"/><rect x="276" y="0" width="1" height="214" fill="#0f318f" opacity="0.4"/><rect x="283" y="0" width="1" height="214" fill="#0f318f" opacity="0.4"/><rect x="0" y="210" width="290" height="1" fill="#0f318f" opacity="0.22"/><rect x="0" y="207" width="290" height="1" fill="#0f318f" opacity="0.22"/><rect x="0" y="204" width="290" height="1" fill="#0f318f" opacity="0.22"/><rect x="0" y="201" width="290" height="1" fill="#0f318f" opacity="0.22"/><rect x="0" y="195" width="290" height="1" fill="#0f318f" opacity="0.22"/><rect x="0" y="192" width="290" height="1" fill="#0f318f" opacity="0.22"/><rect x="0" y="189" width="290" height="1" fill="#0f318f" opacity="0.22"/><rect x="0" y="186" width="290" height="1" fill="#0f318f" opacity="0.22"/><rect x="0" y="180" width="290" height="1" fill="#0f318f" opacity="0.22"/><rect x="0" y="177" width="290" height="1" fill="#0f318f" opacity="0.22"/><rect x="0" y="174" width="290" height="1" fill="#0f318f" opacity="0.22"/><rect x="0" y="171" width="290" height="1" fill="#0f318f" opacity="0.22"/><rect x="0" y="165" width="290" height="1" fill="#0f318f" opacity="0.22"/><rect x="0" y="162" width="290" height="1" fill="#0f318f" opacity="0.22"/><rect x="0" y="158" width="290" height="1" fill="#0f318f" opacity="0.22"/><rect x="0" y="155" width="290" height="1" fill="#0f318f" opacity="0.22"/><rect x="0" y="149" width="290" height="1" fill="#0f318f" opacity="0.22"/><rect x="0" y="146" width="290" height="1" fill="#0f318f" opacity="0.22"/><rect x="0" y="143" width="290" height="1" fill="#0f318f" opacity="0.22"/><rect x="0" y="140" width="290" height="1" fill="#0f318f" opacity="0.22"/><rect x="0" y="134" width="290" height="1" fill="#0f318f" opacity="0.22"/><rect x="0" y="131" width="290" height="1" fill="#0f318f" opacity="0.22"/><rect x="0" y="128" width="290" height="1" fill="#0f318f" opacity="0.22"/><rect x="0" y="125" width="290" height="1" fill="#0f318f" opacity="0.22"/><rect x="0" y="119" width="290" height="1" fill="#0f318f" opacity="0.22"/><rect x="0" y="116" width="290" height="1" fill="#0f318f" opacity="0.22"/><rect x="0" y="113" width="290" height="1" fill="#0f318f" opacity="0.22"/><rect x="0" y="110" width="290" height="1" fill="#0f318f" opacity="0.22"/><rect x="0" y="104" width="290" height="1" fill="#0f318f" opacity="0.22"/><rect x="0" y="101" width="290" height="1" fill="#0f318f" opacity="0.22"/><rect x="0" y="97" width="290" height="1" fill="#0f318f" opacity="0.22"/><rect x="0" y="94" width="290" height="1" fill="#0f318f" opacity="0.22"/><rect x="0" y="88" width="290" height="1" fill="#0f318f" opacity="0.22"/><rect x="0" y="85" width="290" height="1" fill="#0f318f" opacity="0.22"/><rect x="0" y="82" width="290" height="1" fill="#0f318f" opacity="0.22"/><rect x="0" y="79" width="290" height="1" fill="#0f318f" opacity="0.22"/><rect x="0" y="73" width="290" height="1" fill="#0f318f" opacity="0.22"/><rect x="0" y="70" width="290" height="1" fill="#0f318f" opacity="0.22"/><rect x="0" y="67" width="290" height="1" fill="#0f318f" opacity="0.22"/><rect x="0" y="64" width="290" height="1" fill="#0f318f" opacity="0.22"/><rect x="0" y="58" width="290" height="1" fill="#0f318f" opacity="0.22"/><rect x="0" y="55" width="290" height="1" fill="#0f318f" opacity="0.22"/><rect x="0" y="52" width="290" height="1" fill="#0f318f" opacity="0.22"/><rect x="0" y="49" width="290" height="1" fill="#0f318f" opacity="0.22"/><rect x="0" y="43" width="290" height="1" fill="#0f318f" opacity="0.22"/><rect x="0" y="40" width="290" height="1" fill="#0f318f" opacity="0.22"/><rect x="0" y="36" width="290" height="1" fill="#0f318f" opacity="0.22"/><rect x="0" y="33" width="290" height="1" fill="#0f318f" opacity="0.22"/><rect x="0" y="27" width="290" height="1" fill="#0f318f" opacity="0.22"/><rect x="0" y="24" width="290" height="1" fill="#0f318f" opacity="0.22"/><rect x="0" y="22" width="290" height="1" fill="#0f318f" opacity="0.22"/><rect x="0" y="19" width="290" height="1" fill="#0f318f" opacity="0.22"/><rect x="0" y="13" width="290" height="1" fill="#0f318f" opacity="0.22"/><rect x="0" y="10" width="290" height="1" fill="#0f318f" opacity="0.22"/><rect x="0" y="6" width="290" height="1" fill="#0f318f" opacity="0.22"/><rect x="0" y="3" width="290" height="1" fill="#0f318f" opacity="0.22"/><rect x="33" y="0" width="1" height="214" fill="#72a0e0"/><rect x="64" y="0" width="1" height="214" fill="#72a0e0"/><rect x="97" y="0" width="1" height="214" fill="#72a0e0"/><rect x="129" y="0" width="1" height="214" fill="#72a0e0"/><rect x="193" y="0" width="1" height="214" fill="#72a0e0"/><rect x="225" y="0" width="1" height="214" fill="#72a0e0"/><rect x="257" y="0" width="1" height="214" fill="#72a0e0"/><rect x="289" y="0" width="1" height="214" fill="#72a0e0"/><rect x="0" y="213" width="290" height="1" fill="#72a0e0"/><rect x="0" y="198" width="290" height="1" fill="#72a0e0"/><rect x="0" y="183" width="290" height="1" fill="#72a0e0"/><rect x="0" y="168" width="290" height="1" fill="#72a0e0"/><rect x="0" y="152" width="290" height="1" fill="#72a0e0"/><rect x="0" y="137" width="290" height="1" fill="#72a0e0"/><rect x="0" y="122" width="290" height="1" fill="#72a0e0"/><rect x="0" y="107" width="290" height="1" fill="#72a0e0"/><rect x="0" y="91" width="290" height="1" fill="#72a0e0"/><rect x="0" y="76" width="290" height="1" fill="#72a0e0"/><rect x="0" y="61" width="290" height="1" fill="#72a0e0"/><rect x="0" y="46" width="290" height="1" fill="#72a0e0"/><rect x="0" y="30" width="290" height="1" fill="#72a0e0"/><rect x="0" y="16" width="290" height="1" fill="#72a0e0"/><rect x="0" y="0" width="290" height="1" fill="#72a0e0"/><rect x="161" y="0" width="1" height="214" fill="#d070d8"/><polyline points="32.3,28.0 32.5,18.2 61.0,18.2 61.5,12.0 62.0,5.5 257.7,5.5 257.7,18.2 287.5,18.2 288.0,49.0 287.0,79.0 287.0,106.0 282.9,114.0 272.6,130.6 257.7,151.1 242.9,167.8 225.2,190.2 211.2,201.3 205.7,202.5 121.5,202.6 108.4,196.7 97.3,189.2 91.7,183.7 80.5,171.6 65.7,155.7 58.2,148.3 49.8,136.2 43.3,123.2 37.4,107.4 33.1,106.1 32.8,49.0 32.0,39.0 32.3,28.0" fill="none" stroke="#dce8f8" stroke-width="1.05"/><circle cx="137.8" cy="47.5" r="2.6" fill="none" stroke="#b8e0f0" stroke-width="1.2"/><path d="M161.5 73.30000000000001 l3 3 l-3 3 l-3 -3 Z" fill="#40d040"/></svg>
<div style="left:64px;top:454px;width:5px;height:1px;background:#333"></div>
<span class="t n" id="t75" style="left:40.3px;top:451.05px;font-size:9.29px;font-weight:normal;color:#222;transform:scaleX(0.9926);">-50.0</span>
<div style="left:64px;top:439px;width:5px;height:1px;background:#333"></div>
<span class="t n" id="t76" style="left:40.3px;top:436.05px;font-size:9.29px;font-weight:normal;color:#222;transform:scaleX(0.9926);">-40.0</span>
<div style="left:64px;top:424px;width:5px;height:1px;background:#333"></div>
<span class="t n" id="t77" style="left:40.3px;top:421.05px;font-size:9.29px;font-weight:normal;color:#222;transform:scaleX(0.9926);">-30.0</span>
<div style="left:64px;top:409px;width:5px;height:1px;background:#333"></div>
<span class="t n" id="t78" style="left:40.3px;top:406.05px;font-size:9.29px;font-weight:normal;color:#222;transform:scaleX(0.9926);">-20.0</span>
<div style="left:64px;top:393px;width:5px;height:1px;background:#333"></div>
<span class="t n" id="t79" style="left:40.3px;top:390.05px;font-size:9.29px;font-weight:normal;color:#222;transform:scaleX(0.9926);">-10.0</span>
<div style="left:64px;top:378px;width:5px;height:1px;background:#333"></div>
<span class="t n" id="t80" style="left:48.3px;top:375.05px;font-size:9.29px;font-weight:normal;color:#222;transform:scaleX(1.0073);">0.0</span>
<div style="left:64px;top:363px;width:5px;height:1px;background:#333"></div>
<span class="t n" id="t81" style="left:44.3px;top:360.05px;font-size:9.29px;font-weight:normal;color:#222;transform:scaleX(0.9404);">10.0</span>
<div style="left:64px;top:348px;width:5px;height:1px;background:#333"></div>
<span class="t n" id="t82" style="left:44.3px;top:345.05px;font-size:9.29px;font-weight:normal;color:#222;transform:scaleX(0.9404);">20.0</span>
<div style="left:64px;top:332px;width:5px;height:1px;background:#333"></div>
<span class="t n" id="t83" style="left:44.3px;top:329.05px;font-size:9.29px;font-weight:normal;color:#222;transform:scaleX(0.9404);">30.0</span>
<div style="left:64px;top:317px;width:5px;height:1px;background:#333"></div>
<span class="t n" id="t84" style="left:44.3px;top:314.05px;font-size:9.29px;font-weight:normal;color:#222;transform:scaleX(0.9404);">40.0</span>
<div style="left:64px;top:302px;width:5px;height:1px;background:#333"></div>
<span class="t n" id="t85" style="left:44.3px;top:299.05px;font-size:9.29px;font-weight:normal;color:#222;transform:scaleX(0.9404);">50.0</span>
<div style="left:64px;top:287px;width:5px;height:1px;background:#333"></div>
<span class="t n" id="t86" style="left:44.3px;top:284.05px;font-size:9.29px;font-weight:normal;color:#222;transform:scaleX(0.9404);">60.0</span>
<div style="left:64px;top:271px;width:5px;height:1px;background:#333"></div>
<span class="t n" id="t87" style="left:44.3px;top:268.05px;font-size:9.29px;font-weight:normal;color:#222;transform:scaleX(0.9404);">70.0</span>
<div style="left:64px;top:257px;width:5px;height:1px;background:#333"></div>
<span class="t n" id="t88" style="left:44.3px;top:254.05px;font-size:9.29px;font-weight:normal;color:#222;transform:scaleX(0.9404);">80.0</span>
<div style="left:64px;top:241px;width:5px;height:1px;background:#333"></div>
<span class="t n" id="t89" style="left:44.3px;top:238.05px;font-size:9.29px;font-weight:normal;color:#222;transform:scaleX(0.9404);">90.0</span>
<div style="left:69px;top:455px;width:1px;height:5px;background:#333"></div>
<span class="t n" id="t90" style="left:56.0px;top:461.27px;font-size:9.43px;font-weight:normal;color:#222;transform:scaleX(0.9581);">-125.0</span>
<div style="left:102px;top:455px;width:1px;height:5px;background:#333"></div>
<span class="t n" id="t91" style="left:89.0px;top:461.27px;font-size:9.43px;font-weight:normal;color:#222;transform:scaleX(0.9581);">-100.0</span>
<div style="left:133px;top:455px;width:1px;height:5px;background:#333"></div>
<span class="t n" id="t92" style="left:121.8px;top:461.27px;font-size:9.43px;font-weight:normal;color:#222;transform:scaleX(1.0240);">-75.0</span>
<div style="left:166px;top:455px;width:1px;height:5px;background:#333"></div>
<span class="t n" id="t93" style="left:154.8px;top:461.27px;font-size:9.43px;font-weight:normal;color:#222;transform:scaleX(1.0240);">-50.0</span>
<div style="left:198px;top:455px;width:1px;height:5px;background:#333"></div>
<span class="t n" id="t94" style="left:186.8px;top:461.27px;font-size:9.43px;font-weight:normal;color:#222;transform:scaleX(1.0240);">-25.0</span>
<div style="left:230px;top:455px;width:1px;height:5px;background:#333"></div>
<span class="t n" id="t95" style="left:223.10000000000002px;top:461.27px;font-size:9.43px;font-weight:normal;color:#222;transform:scaleX(1.0222);">0.0</span>
<div style="left:262px;top:455px;width:1px;height:5px;background:#333"></div>
<span class="t n" id="t96" style="left:253.05px;top:461.27px;font-size:9.43px;font-weight:normal;color:#222;transform:scaleX(0.9540);">25.0</span>
<div style="left:294px;top:455px;width:1px;height:5px;background:#333"></div>
<span class="t n" id="t97" style="left:285.05px;top:461.27px;font-size:9.43px;font-weight:normal;color:#222;transform:scaleX(0.9540);">50.0</span>
<div style="left:326px;top:455px;width:1px;height:5px;background:#333"></div>
<span class="t n" id="t98" style="left:317.05px;top:461.27px;font-size:9.43px;font-weight:normal;color:#222;transform:scaleX(0.9540);">75.0</span>
<div style="left:358px;top:455px;width:1px;height:5px;background:#333"></div>
<span class="t n" id="t99" style="left:346.8px;top:461.27px;font-size:9.43px;font-weight:normal;color:#222;transform:scaleX(0.9331);">100.0</span>
<span class="t b" id="t100" style="left:171.2px;top:473.18px;font-size:9.74px;font-weight:bold;color:#111;transform:scaleX(0.9014);">ÁNGULO HORARIO</span>
<div style="left:198px;top:214px;width:33px;height:12px;box-sizing:border-box;background:#dde6e6;border-top:1px solid #f0f4f4;border-left:1px solid #f0f4f4;border-right:1px solid #607a7c;border-bottom:1px solid #607a7c"></div>
<span class="t b" id="t101" style="left:200px;top:217.29px;font-size:8.14px;font-weight:bold;color:#111;transform:scaleX(1.0198);">NORTE</span>
<div style="left:203px;top:493px;width:23px;height:12px;box-sizing:border-box;background:#dde6e6;border-top:1px solid #f0f4f4;border-left:1px solid #f0f4f4;border-right:1px solid #607a7c;border-bottom:1px solid #607a7c"></div>
<span class="t b" id="t102" style="left:204.8px;top:495.19px;font-size:8.72px;font-weight:bold;color:#111;transform:scaleX(0.9771);">SUR</span>
<div style="left:426px;top:224px;width:117px;height:30px;box-sizing:border-box;border:1px solid #5c5a30;background:linear-gradient(#ffe63c,#f9d824 45%,#efc414);box-shadow:inset 1px 1px 0 #fff2a0,inset -2px -2px 0 #c0a010"></div>
<span class="t n" id="t103" style="left:439.5px;top:233.48px;font-size:12.71px;font-weight:normal;color:#1a1a10;transform:scaleX(1.0090);">SEGUIMIENTO</span>
<div style="left:398px;top:276px;width:176px;height:88px;box-sizing:border-box;border-top:1px solid #bfd8db;border-left:1px solid #bfd8db;border-bottom:1px solid #5b8288;border-right:1px solid #5b8288"></div>
<div style="left:399px;top:277px;width:174px;height:86px;box-sizing:border-box;border-top:1px solid #5b8288;border-left:1px solid #5b8288;border-bottom:1px solid #bfd8db;border-right:1px solid #bfd8db"></div>
<span class="t b" id="t104" style="left:410px;top:285.76px;font-size:9.59px;font-weight:bold;color:#111;transform:scaleX(0.9912);">banda S (dBm)</span>
<span class="t b" id="t105" style="left:494.5px;top:285.76px;font-size:9.59px;font-weight:bold;color:#111;transform:scaleX(0.9971);">banda X (dBm)</span>
<div style="left:420px;top:299px;width:48px;height:14px;background:#d9d9d9;border-top:2px solid #5b8288;border-left:2px solid #5b8288;border-bottom:1px solid #a9c9cd;border-right:1px solid #a9c9cd;box-sizing:border-box"></div>
<div style="left:503px;top:299px;width:44px;height:14px;background:#d9d9d9;border-top:2px solid #5b8288;border-left:2px solid #5b8288;border-bottom:1px solid #a9c9cd;border-right:1px solid #a9c9cd;box-sizing:border-box"></div>
<span class="t n" id="t106" style="left:424.2px;top:301.90px;font-size:9.57px;font-weight:normal;color:#222;transform:scaleX(0.9341);">-41.006</span>
<span class="t n" id="t107" style="left:506.8px;top:301.90px;font-size:9.57px;font-weight:normal;color:#222;transform:scaleX(0.9321);">-28.8628</span>
<span class="t b" id="t108" style="left:415.8px;top:324.96px;font-size:9.59px;font-weight:bold;color:#111;transform:scaleX(0.9809);">banda S (K)</span>
<span class="t b" id="t109" style="left:500.4px;top:324.96px;font-size:9.59px;font-weight:bold;color:#111;transform:scaleX(0.9884);">banda X (K)</span>
<div style="left:420px;top:337px;width:48px;height:15px;background:#d9d9d9;border-top:2px solid #5b8288;border-left:2px solid #5b8288;border-bottom:1px solid #a9c9cd;border-right:1px solid #a9c9cd;box-sizing:border-box"></div>
<div style="left:503px;top:337px;width:44px;height:15px;background:#d9d9d9;border-top:2px solid #5b8288;border-left:2px solid #5b8288;border-bottom:1px solid #a9c9cd;border-right:1px solid #a9c9cd;box-sizing:border-box"></div>
<span class="t n" id="t110" style="left:423.6px;top:340.70px;font-size:9.57px;font-weight:normal;color:#222;transform:scaleX(0.9370);">235.688</span>
<span class="t n" id="t111" style="left:506.8px;top:340.70px;font-size:9.57px;font-weight:normal;color:#222;transform:scaleX(0.9428);">99.2565</span>
<div style="left:416px;top:382px;width:68px;height:29px;box-sizing:border-box;border:1px solid #3c4446;background:linear-gradient(#b4b4b4,#a4a4a4 50%,#8e8e8e);box-shadow:inset 1px 1px 0 #f4f4f4,inset -2px -2px 0 #9a9a9a"></div>
<span class="t b" id="t112" style="left:427.6px;top:393.54px;font-size:8.43px;font-weight:bold;color:#111;transform:scaleX(1.0907);">MEDIMOS</span>
<div style="left:416px;top:424px;width:68px;height:29px;box-sizing:border-box;border:1px solid #4a5456;background:linear-gradient(#e6e6e6,#d2d2d2 50%,#bdbdbd);box-shadow:inset 1px 1px 0 #f4f4f4,inset -2px -2px 0 #9a9a9a"></div>
<span class="t b" id="t113" style="left:426.2px;top:430.47px;font-size:7.7px;font-weight:bold;color:#111;transform:scaleX(1.1426);">GUARDAR</span>
<span class="t b" id="t114" style="left:427.6px;top:441.52px;font-size:7.99px;font-weight:bold;color:#111;transform:scaleX(1.1486);">MEDIDAS</span>
<div style="left:416px;top:465px;width:68px;height:35px;box-sizing:border-box;border:1px solid #4a5456;background:linear-gradient(#e6e6e6,#d2d2d2 50%,#bdbdbd);box-shadow:inset 1px 1px 0 #f4f4f4,inset -2px -2px 0 #9a9a9a"></div>
<span class="t b" id="t115" style="left:426.2px;top:479.62px;font-size:8.87px;font-weight:bold;color:#111;transform:scaleX(0.9878);">CALIBRAR</span>
<span class="t b" id="t116" style="left:498px;top:417.45px;font-size:9.01px;font-weight:bold;color:#111;transform:scaleX(1.0528);">guardando datos....</span>
<span class="t b" id="t117" style="left:510.8px;top:458.94px;font-size:8.43px;font-weight:bold;color:#111;transform:scaleX(1.1068);">calibrando....</span>
<svg style="left:520px;top:425px" width="28" height="28"><defs><radialGradient id="g439" cx="0.42" cy="0.38" r="0.6"><stop offset="0" stop-color="#4e8a3a"/><stop offset="0.6" stop-color="#1f4e1a"/><stop offset="1" stop-color="#163a12"/></radialGradient></defs><circle cx="14.5" cy="14.5" r="10.5" fill="#a8c8c8" opacity="0.55"/><circle cx="13.5" cy="13.5" r="9" fill="url(#g439)" stroke="#3b5a50" stroke-width="0.8"/></svg>
<svg style="left:520px;top:467px" width="28" height="28"><defs><radialGradient id="g481" cx="0.42" cy="0.38" r="0.6"><stop offset="0" stop-color="#4e8a3a"/><stop offset="0.6" stop-color="#1f4e1a"/><stop offset="1" stop-color="#163a12"/></radialGradient></defs><circle cx="14.5" cy="14.5" r="10.5" fill="#a8c8c8" opacity="0.55"/><circle cx="13.5" cy="13.5" r="9" fill="url(#g481)" stroke="#3b5a50" stroke-width="0.8"/></svg>
<div style="left:157px;top:522px;width:78px;height:18px;box-sizing:border-box;background:#d9d9d9;border-top:1px solid #f2f2f2;border-left:1px solid #f2f2f2;border-right:2px solid #6e7e80;border-bottom:2px solid #6e7e80"></div>
<span class="t b" id="t118" style="left:165.8px;top:526.83px;font-size:12.79px;font-weight:bold;color:#3b6ab5;transform:scaleX(1.0110);">OFFSETS</span>
<div style="left:47px;top:548px;width:290px;height:79px;box-sizing:border-box;border-top:2px solid #5d868b;border-left:2px solid #5d868b;border-bottom:2px solid #a4c6ca;border-right:2px solid #a4c6ca"></div>
<span class="t b" id="t119" style="left:65px;top:554.54px;font-size:8.43px;font-weight:bold;color:#111;transform:scaleX(1.1316);">AZIMUT</span>
<span class="t b" id="t120" style="left:142px;top:554.54px;font-size:8.43px;font-weight:bold;color:#111;transform:scaleX(1.0342);">ÁNGULO HORARIO</span>
<span class="t b" id="t121" style="left:235.5px;top:554.54px;font-size:8.43px;font-weight:bold;color:#111;transform:scaleX(1.0167);">CROSS DECLINACIÓN</span>
<span class="t b" id="t122" style="left:65px;top:589.47px;font-size:9.16px;font-weight:bold;color:#111;transform:scaleX(0.9346);">ELEVACIÓN</span>
<span class="t b" id="t123" style="left:142px;top:589.47px;font-size:9.16px;font-weight:bold;color:#111;transform:scaleX(0.9435);">DECLINACIÓN</span>
<div style="left:67px;top:567px;width:54px;height:14px;background:#d9d9d9;border-top:2px solid #5b8288;border-left:2px solid #5b8288;border-bottom:1px solid #a9c9cd;border-right:1px solid #a9c9cd;box-sizing:border-box"></div>
<div style="left:144px;top:567px;width:54px;height:14px;background:#d9d9d9;border-top:2px solid #5b8288;border-left:2px solid #5b8288;border-bottom:1px solid #a9c9cd;border-right:1px solid #a9c9cd;box-sizing:border-box"></div>
<div style="left:237px;top:567px;width:54px;height:14px;background:#d9d9d9;border-top:2px solid #5b8288;border-left:2px solid #5b8288;border-bottom:1px solid #a9c9cd;border-right:1px solid #a9c9cd;box-sizing:border-box"></div>
<div style="left:67px;top:602px;width:54px;height:14px;background:#d9d9d9;border-top:2px solid #5b8288;border-left:2px solid #5b8288;border-bottom:1px solid #a9c9cd;border-right:1px solid #a9c9cd;box-sizing:border-box"></div>
<div style="left:144px;top:602px;width:54px;height:14px;background:#d9d9d9;border-top:2px solid #5b8288;border-left:2px solid #5b8288;border-bottom:1px solid #a9c9cd;border-right:1px solid #a9c9cd;box-sizing:border-box"></div>
<span class="t n" id="t124" style="left:71.8px;top:569.85px;font-size:9.29px;font-weight:normal;color:#222;transform:scaleX(0.9581);">0.0000</span>
<span class="t n" id="t125" style="left:148px;top:569.85px;font-size:9.29px;font-weight:normal;color:#222;transform:scaleX(0.9792);">0.0000</span>
<span class="t n" id="t126" style="left:241.7px;top:569.85px;font-size:9.29px;font-weight:normal;color:#222;transform:scaleX(0.9686);">0.0000</span>
<span class="t n" id="t127" style="left:71.8px;top:604.85px;font-size:9.29px;font-weight:normal;color:#222;transform:scaleX(0.9581);">0.0000</span>
<span class="t n" id="t128" style="left:148px;top:604.85px;font-size:9.29px;font-weight:normal;color:#222;transform:scaleX(0.9792);">0.0000</span>
<span class="t b" id="t129" style="left:352.7px;top:560.22px;font-size:8.87px;font-weight:bold;color:#111;transform:scaleX(1.1076);">preguntar offsets</span>
<svg style="left:366px;top:575px" width="44" height="20"><ellipse cx="21" cy="10.5" rx="20" ry="8" fill="#4f6a6e" opacity="0.55"/><ellipse cx="20" cy="9" rx="19" ry="7" fill="#dcdcdc" stroke="#5d6a6b"/><path d="M26 4.5 L34.5 9 L26 13.5 Z" fill="#2b5e28" stroke="#244f22" stroke-width="0.8" stroke-linejoin="round"/></svg>
<div style="left:457px;top:529px;width:117px;height:102px;box-sizing:border-box;border:2px solid #3e4648;box-shadow:inset 1px 1px 0 #9fbfc3"></div>
<span class="t b" id="t130" style="left:466.4px;top:544.19px;font-size:8.72px;font-weight:bold;color:#111;transform:scaleX(1.0807);">numero calibraciones</span>
<span class="t b" id="t131" style="left:464px;top:584.99px;font-size:8.72px;font-weight:bold;color:#111;transform:scaleX(1.0832);">velocidad de medición</span>
<svg style="left:483px;top:553px" width="13" height="20"><ellipse cx="6" cy="9.5" rx="5" ry="9" fill="#d8d8d8" stroke="#7c8c8d"/><path d="M4 7 L6 4 L8 7 M4 12 L6 15 L8 12" stroke="#888" fill="none"/></svg>
<div style="left:495px;top:556px;width:25px;height:14px;box-sizing:border-box;background:#fbfbfb;border-top:1px solid #9fbcbf;border-left:1px solid #9fbcbf;border-bottom:1px solid #d8e8ea;border-right:1px solid #d8e8ea"></div>
<svg style="left:483px;top:595px" width="13" height="20"><ellipse cx="6" cy="9.5" rx="5" ry="9" fill="#d8d8d8" stroke="#7c8c8d"/><path d="M4 7 L6 4 L8 7 M4 12 L6 15 L8 12" stroke="#888" fill="none"/></svg>
<div style="left:495px;top:599px;width:25px;height:14px;box-sizing:border-box;background:#fbfbfb;border-top:1px solid #9fbcbf;border-left:1px solid #9fbcbf;border-bottom:1px solid #d8e8ea;border-right:1px solid #d8e8ea"></div>
<span class="t n" id="t132" style="left:498.5px;top:559.06px;font-size:10.29px;font-weight:normal;color:#111;transform:scaleX(0.6995);">1</span>
<span class="t n" id="t133" style="left:496.8px;top:601.06px;font-size:10.29px;font-weight:normal;color:#111;transform:scaleX(0.9093);">5</span>
<span class="t b" id="t134" style="left:32.55px;top:347.8px;font-size:8.37px;font-weight:bold;color:#111;transform:rotate(-90deg) scaleX(1.0224) translate(-50%,-50%);">DECLINACIÓN</span>
<span class="t n" id="t135" style="left:637.8px;top:281.2px;font-size:8.78px;font-weight:normal;color:#1a1a1a;transform:rotate(-90deg) scaleX(0.9228) translate(-50%,-50%);">TEMPERATURA (K)</span>
<span class="t n" id="t136" style="left:637.8px;top:500.6px;font-size:8.78px;font-weight:normal;color:#1a1a1a;transform:rotate(-90deg) scaleX(0.9228) translate(-50%,-50%);">TEMPERATURA (K)</span>
</body></html>
